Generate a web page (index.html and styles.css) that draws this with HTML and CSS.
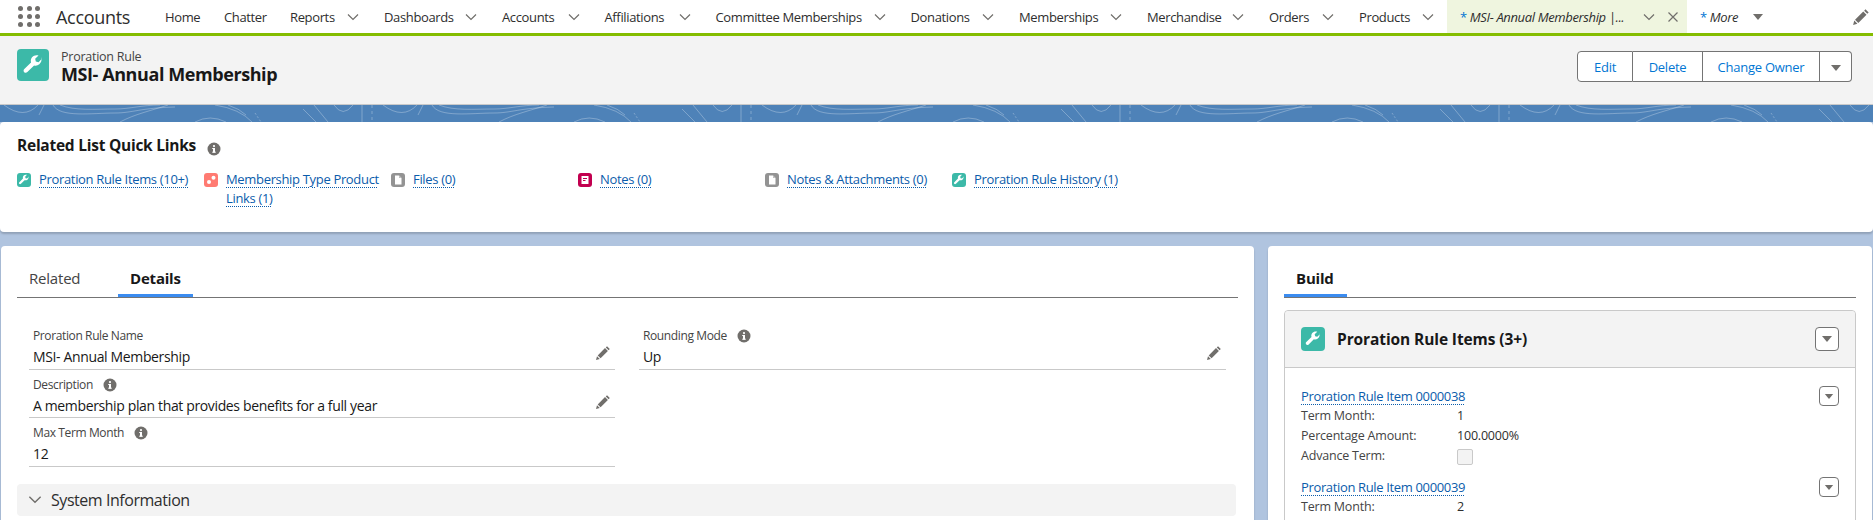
FILE: index.html
```html
<!DOCTYPE html>
<html lang="en">
<head>
<meta charset="utf-8">
<title>MSI- Annual Membership</title>
<link rel="stylesheet" href="styles.css">
</head>
<body>
<svg class="defs" aria-hidden="true">
  <defs>
    <symbol id="i-chev" viewBox="0 0 12 8"><path d="M1 1.500l5 5 5-5" fill="none" stroke="currentColor" stroke-width="1.200"/></symbol>
    <symbol id="i-wrench" viewBox="0 0 24 24"><path fill="#fff" d="M20.200 6.300l-3.100 3.100-2.500-.6-.6-2.500 3.100-3.100c-2.200-.7-4.600-.1-6 1.600-1.100 1.400-1.400 3.100-.9 4.800l-6.200 6.100c-.9.900-.9 2.100-.1 2.900.8.800 2 .8 2.900-.1l6.200-6.100c1.700.5 3.400.1 4.800-1 1.800-1.500 2.500-3.900 2-6.700z"/></symbol>
    <symbol id="i-info" viewBox="0 0 14 14"><circle cx="7" cy="7" r="6.500" fill="#706e6b"/><rect x="6" y="6" width="2" height="4.600" fill="#fff"/><rect x="5.200" y="6" width="1.200" height="1" fill="#fff"/><rect x="5.200" y="9.700" width="3.600" height="1" fill="#fff"/><circle cx="7" cy="4.100" r="1.100" fill="#fff"/></symbol>
    <symbol id="i-pencil" viewBox="0 0 16 16"><path fill="#706e6b" d="M12 1.200l2.800 2.800-1.200 1.200-2.800-2.800zM10 3.100l2.900 2.900-7.300 7.300-2.900-2.900zM2 11.200l2.800 2.800-3.800 1z"/></symbol>
    <symbol id="i-drop" viewBox="0 0 12 8"><path d="M1 1h10L6 7z" fill="#706e6b"/></symbol>
    <symbol id="i-doc" viewBox="0 0 14 14"><path fill="#fff" d="M4 2.500h4l2.500 2.500v6.500H4z"/><path fill="#bdbdbd" d="M8 2.500V5h2.500z"/></symbol>
  </defs>
</svg>

<div class="page">
  <nav class="nav">
    <div class="waffle" aria-label="App launcher"><i></i><i></i><i></i><i></i><i></i><i></i><i></i><i></i><i></i></div>
    <div class="app-name">Accounts</div>
    <a class="nav-item">Home</a>
    <a class="nav-item">Chatter</a>
    <a class="nav-item">Reports<svg class="chev"><use href="#i-chev"/></svg></a>
    <a class="nav-item">Dashboards<svg class="chev"><use href="#i-chev"/></svg></a>
    <a class="nav-item">Accounts<svg class="chev"><use href="#i-chev"/></svg></a>
    <a class="nav-item">Affiliations<svg class="chev"><use href="#i-chev"/></svg></a>
    <a class="nav-item">Committee Memberships<svg class="chev"><use href="#i-chev"/></svg></a>
    <a class="nav-item">Donations<svg class="chev"><use href="#i-chev"/></svg></a>
    <a class="nav-item">Memberships<svg class="chev"><use href="#i-chev"/></svg></a>
    <a class="nav-item">Merchandise<svg class="chev"><use href="#i-chev"/></svg></a>
    <a class="nav-item">Orders<svg class="chev"><use href="#i-chev"/></svg></a>
    <a class="nav-item">Products<svg class="chev chev-last"><use href="#i-chev"/></svg></a>
    <a class="nav-item nav-active"><em><span class="star">*</span> MSI- Annual Membership |...</em><svg class="chev chev-active"><use href="#i-chev"/></svg><span class="close">
      <svg viewBox="0 0 12 12"><path d="M1.500 1.500l9 9M10.500 1.500l-9 9" stroke="#706e6b" stroke-width="1.200" fill="none"/></svg></span></a>
    <a class="nav-item nav-more"><em><span class="star">*</span> More</em><svg class="drop-more"><use href="#i-drop"/></svg></a>
    <svg class="nav-pencil"><use href="#i-pencil"/></svg>
  </nav>

  <header class="record-head">
    <div class="head-icon"><svg><use href="#i-wrench"/></svg></div>
    <div class="head-text">
      <div class="head-type">Proration Rule</div>
      <h1 class="head-title">MSI- Annual Membership</h1>
    </div>
    <div class="btn-group">
      <button class="btn btn-edit">Edit</button>
      <button class="btn btn-delete">Delete</button>
      <button class="btn btn-owner">Change Owner</button>
      <button class="btn btn-more" aria-label="More actions"><svg><use href="#i-drop"/></svg></button>
    </div>
  </header>

  <div class="band">
    <svg width="100%" height="17" aria-hidden="true">
      <defs>
        <pattern id="topo" width="379" height="17" patternUnits="userSpaceOnUse">
          <g fill="none" stroke="#fff" stroke-opacity=".28" stroke-width="1">
            <path d="M4 0Q24 15 38 0"/><path d="M44 0L39 10"/>
            <path d="M53 0C60 13 92 8 115 8C132 8 140 3 175 2"/>
            <path d="M60 0C75 6 95 4 115 4C130 4 142 0 160 0"/>
            <path d="M120 17C135 9 150 6 168 0"/>
            <path d="M195 17Q210 9 226 17"/>
            <path d="M215 0Q240 4 252 17"/><path d="M228 0Q240 4 246 10"/>
            <path d="M255 8L261 17" stroke-dasharray="2 2"/>
            <path d="M303 4L316 17"/><path d="M314 0L328 17"/>
            <path d="M334 0Q343 13 353 0"/>
            <path d="M362 0V17"/><path d="M372 0V17" stroke-dasharray="3 3"/>
          </g>
        </pattern>
      </defs>
      <rect width="100%" height="17" fill="url(#topo)"/>
    </svg>
  </div>

  <main class="content">
    <section class="card quick">
      <div class="quick-title"><h2>Related List Quick Links</h2><svg class="info"><use href="#i-info"/></svg></div>
      <div class="quick-grid">
        <div class="quick-item"><span class="qi qi-teal"><svg><use href="#i-wrench"/></svg></span><a class="link">Proration Rule Items (10+)</a></div>
        <div class="quick-item"><span class="qi qi-coral"><svg viewBox="0 0 14 14"><circle cx="5" cy="9" r="2" fill="#fff"/><circle cx="9.500" cy="4.800" r="2" fill="#fff"/></svg></span><a class="link">Membership Type Product Links (1)</a></div>
        <div class="quick-item"><span class="qi qi-gray"><svg><use href="#i-doc"/></svg></span><a class="link">Files (0)</a></div>
        <div class="quick-item"><span class="qi qi-crimson"><svg viewBox="0 0 14 14"><path fill="#fff" d="M3.500 3h7v8h-7z"/><path fill="#c2004f" d="M5 5h4v1H5zM5 7h2.500v1H5z"/></svg></span><a class="link">Notes (0)</a></div>
        <div class="quick-item"><span class="qi qi-gray"><svg><use href="#i-doc"/></svg></span><a class="link">Notes &amp; Attachments (0)</a></div>
        <div class="quick-item"><span class="qi qi-teal"><svg><use href="#i-wrench"/></svg></span><a class="link">Proration Rule History (1)</a></div>
      </div>
    </section>

    <div class="columns">
      <section class="card panel">
        <div class="tabs">
          <a class="tab tab-related">Related</a>
          <a class="tab tab-on tab-details">Details</a>
        </div>
        <div class="fields">
          <div class="field-col">
            <div class="field">
              <div class="f-label">Proration Rule Name</div>
              <div class="f-value">MSI- Annual Membership</div>
              <svg class="f-edit"><use href="#i-pencil"/></svg>
            </div>
            <div class="field">
              <div class="f-label">Description<svg class="info"><use href="#i-info"/></svg></div>
              <div class="f-value">A membership plan that provides benefits for a full year</div>
              <svg class="f-edit"><use href="#i-pencil"/></svg>
            </div>
            <div class="field">
              <div class="f-label">Max Term Month<svg class="info"><use href="#i-info"/></svg></div>
              <div class="f-value">12</div>
            </div>
          </div>
          <div class="field-col">
            <div class="field">
              <div class="f-label">Rounding Mode<svg class="info"><use href="#i-info"/></svg></div>
              <div class="f-value">Up</div>
              <svg class="f-edit"><use href="#i-pencil"/></svg>
            </div>
          </div>
        </div>
        <div class="section-bar"><svg class="section-chev"><use href="#i-chev"/></svg>System Information</div>
      </section>

      <section class="card panel">
        <div class="tabs">
          <a class="tab tab-on tab-build">Build</a>
        </div>
        <div class="related-card">
          <div class="rc-head">
            <div class="rc-icon"><svg><use href="#i-wrench"/></svg></div>
            <h2 class="rc-title">Proration Rule Items (3+)</h2>
            <button class="icon-btn icon-btn-lg" aria-label="Actions"><svg><use href="#i-drop"/></svg></button>
          </div>
          <div class="rc-body">
            <article class="rc-item">
              <div class="rc-main">
                <a class="link rc-link">Proration Rule Item 0000038</a>
                <div class="rc-row"><span>Term Month:</span><b>1</b></div>
                <div class="rc-row"><span>Percentage Amount:</span><b>100.0000%</b></div>
                <div class="rc-row"><span>Advance Term:</span><b><i class="check"></i></b></div>
              </div>
              <button class="icon-btn" aria-label="Actions"><svg><use href="#i-drop"/></svg></button>
            </article>
            <article class="rc-item">
              <div class="rc-main">
                <a class="link rc-link">Proration Rule Item 0000039</a>
                <div class="rc-row"><span>Term Month:</span><b>2</b></div>
              </div>
              <button class="icon-btn" aria-label="Actions"><svg><use href="#i-drop"/></svg></button>
            </article>
          </div>
        </div>
      </section>
    </div>
  </main>
</div>
</body>
</html>
```

FILE: styles.css
```css
* { box-sizing: border-box; }
html, body { margin: 0; padding: 0; height: 520px; overflow: hidden; }
body {
  font-family: "Open Sans", "Noto Sans", sans-serif;
  font-size: 13px;
  letter-spacing: -.25px;
  color: #181818;
  background: #b0c4df;
}
.defs { position: absolute; width: 0; height: 0; }
.page { height: 520px; overflow: hidden; }
h1, h2 { margin: 0; }
a { color: inherit; }
button { font: inherit; letter-spacing: inherit; cursor: pointer; }

/* nav */
.nav {
  height: 36px;
  padding-left: 18px;
  background: #fff;
  border-bottom: 3px solid #84bd00;
  display: grid;
  grid-template-columns: 38px 109px 59px 66px 94px 118px 102.5px 111px 195px 108.5px 128px 122px 90px 88px 240px 1fr 24px;
  align-items: center;
}
.waffle {
  display: grid;
  grid-template-columns: repeat(3, 5px);
  gap: 3px 3.5px;
  width: 22px;
}
.waffle i { width: 5px; height: 5px; border-radius: 50%; background: #706e6b; display: block; }
.app-name { font-size: 18px; letter-spacing: -.3px; color: #2e2e2e; }
.nav-item { display: flex; align-items: center; height: 33px; color: #2e2e2e; white-space: nowrap; letter-spacing: -.36px; }
.chev { width: 12px; height: 8px; margin-left: auto; margin-right: 25px; color: #706e6b; flex: none; }
.chev-last { margin-right: 13px; }
.nav-active { background: #eff5df; padding-left: 13px; }
.nav-active em { width: 167px; flex: none; overflow: hidden; font-style: italic; }
.nav-more { padding-left: 13px; }
.star { color: #0176d3; font-style: normal; }
.chev-active { margin: 0 0 0 16px; }
.close { display: flex; margin-left: 12px; }
.close svg { width: 12px; height: 12px; }
.drop-more { width: 12px; height: 8px; margin-left: 14px; }
.nav-pencil { width: 18px; height: 18px; justify-self: end; margin-right: 3px; }

/* record header */
.record-head {
  height: 69px;
  background: #f3f3f3;
  border-bottom: 1px solid #c9c9c9;
  display: flex;
  align-items: flex-start;
  padding: 13px 21px 0 17px;
}
.head-icon { width: 32px; height: 32px; background: #3cb9a8; border-radius: 4px; flex: none; }
.head-icon svg { width: 32px; height: 32px; display: block; padding: 3px; }
.head-text { margin-left: 12px; }
.head-type { font-size: 12.5px; line-height: 16px; color: #444; }
.head-title { font-size: 18px; line-height: 18px; font-weight: 700; letter-spacing: -.42px; }
.btn-group { margin-left: auto; margin-top: 2px; display: flex; height: 31px; }
.btn {
  height: 31px;
  background: #fff;
  border: 1px solid #747474;
  border-left: 0;
  color: #0176d3;
  padding: 0;
}
.btn-edit { width: 56px; border-left: 1px solid #747474; border-radius: 4px 0 0 4px; }
.btn-delete { width: 70px; }
.btn-owner { width: 117px; }
.btn-more { width: 32px; border-radius: 0 4px 4px 0; }
.btn-more svg { width: 12px; height: 8px; display: block; margin: 2px auto 0; }

/* band */
.band { height: 17px; background: #4e82b8; }
.band svg { display: block; }

/* content */
.content { padding: 0 1px; }
.card { background: #fff; border-radius: 4px; box-shadow: 0 2px 2px rgba(0, 0, 0, .18); }
.quick { height: 110px; padding: 12.5px 17px 0; margin: 0 -1px; }
.quick-title { display: flex; align-items: center; height: 20px; }
.quick-title h2 { font-size: 15.5px; line-height: 20px; font-weight: 700; letter-spacing: -.25px; }
.info { width: 14px; height: 14px; margin-left: 9px; flex: none; }
.quick-title .info { margin-left: 11px; margin-top: 8px; }
.quick-grid { display: grid; grid-template-columns: repeat(6, 187px); margin-top: 15.5px; }
.quick-item { display: flex; align-items: flex-start; }
.qi { width: 14px; height: 14px; border-radius: 3px; flex: none; margin-top: 3px; display: block; }
.qi svg { width: 14px; height: 14px; display: block; }
.qi-teal { background: #3cb9a8; }
.qi-coral { background: #ff7b72; }
.qi-gray { background: #939393; }
.qi-crimson { background: #c2004f; }
.link {
  color: #0b5cab;
  text-decoration: underline dotted #0b5cab 1px;
  text-underline-offset: 3px;
  letter-spacing: -.33px;
}
.quick-item .link { margin-left: 8px; line-height: 19px; width: 165px; }

.columns { display: grid; grid-template-columns: 1253px 604px; gap: 14px; margin-top: 14px; }
.panel { height: 400px; padding: 0 16.5px 0 16px; }
.tabs { height: 52px; border-bottom: 1px solid #747474; display: flex; align-items: flex-end; }
.tab { font-size: 15px; height: 52px; line-height: 66px; padding: 0 12px; letter-spacing: -.2px; color: #444; }
.tab-related { width: 76px; margin-right: 25px; }
.tab-details { width: 75px; }
.tab-build { width: 63px; }
.tab-on { color: #181818; font-weight: 700; border-bottom: 3px solid #3b8cf0; }

.fields { display: grid; grid-template-columns: 586px 587px; gap: 24px; padding: 23px 0 0 12px; }
.field { position: relative; height: 48.5px; border-bottom: 1px solid #c9c9c9; padding: 6px 4px 0 4px; }
.f-label { font-size: 12px; line-height: 18px; color: #444; display: flex; align-items: center; letter-spacing: -.38px; }
.f-label .info { margin-left: 10px; }
.f-value { font-size: 14px; line-height: 20px; margin-top: 2px; color: #181818; letter-spacing: -.36px; }
.f-edit { position: absolute; right: 4px; top: 24px; width: 16px; height: 16px; }
.section-bar {
  margin-top: 17px;
  height: 32px;
  width: 1219px;
  background: #f3f3f3;
  border-radius: 4px;
  display: flex;
  align-items: center;
  font-size: 16px;
  padding-left: 11px;
  color: #2e2e2e;
  letter-spacing: -.45px;
}
.section-chev { width: 14px; height: 9px; margin-right: 9px; color: #706e6b; }

.related-card { margin-top: 12px; border: 1px solid #c9c9c9; border-radius: 4px; height: 300px; }
.rc-head {
  height: 57px;
  background: #f3f3f3;
  border-bottom: 1px solid #c9c9c9;
  border-radius: 4px 4px 0 0;
  display: flex;
  align-items: center;
  padding: 0 16px;
}
.rc-icon { width: 24px; height: 24px; background: #3cb9a8; border-radius: 4px; flex: none; }
.rc-icon svg { width: 24px; height: 24px; display: block; padding: 2px; }
.rc-title { font-size: 15.5px; font-weight: 700; margin-left: 12px; flex: 1; letter-spacing: -.1px; }
.icon-btn {
  width: 20px;
  height: 20px;
  border: 1px solid #747474;
  background: #fff;
  border-radius: 4px;
  padding: 0;
  display: flex;
  align-items: center;
  justify-content: center;
  flex: none;
}
.icon-btn svg { width: 10px; height: 7px; }
.icon-btn-lg { width: 24px; height: 24px; }
.icon-btn-lg svg { width: 12px; height: 8px; }
.rc-body { padding: 18px 16px 0; }
.rc-item { display: flex; justify-content: space-between; align-items: flex-start; height: 91px; }
.rc-main { padding-top: 1px; }
.rc-link { display: block; line-height: 19px; font-size: 13px; letter-spacing: -.35px; }
.rc-row { display: grid; grid-template-columns: 156px auto; height: 20px; line-height: 20px; font-size: 12.5px; color: #444; letter-spacing: -.2px; }
.rc-row b { font-weight: 400; color: #2e2e2e; }
.check { display: block; width: 16px; height: 16px; margin-top: 3px; background: #f3f3f3; border: 1px solid #c9c9c9; border-radius: 2px; }
```
